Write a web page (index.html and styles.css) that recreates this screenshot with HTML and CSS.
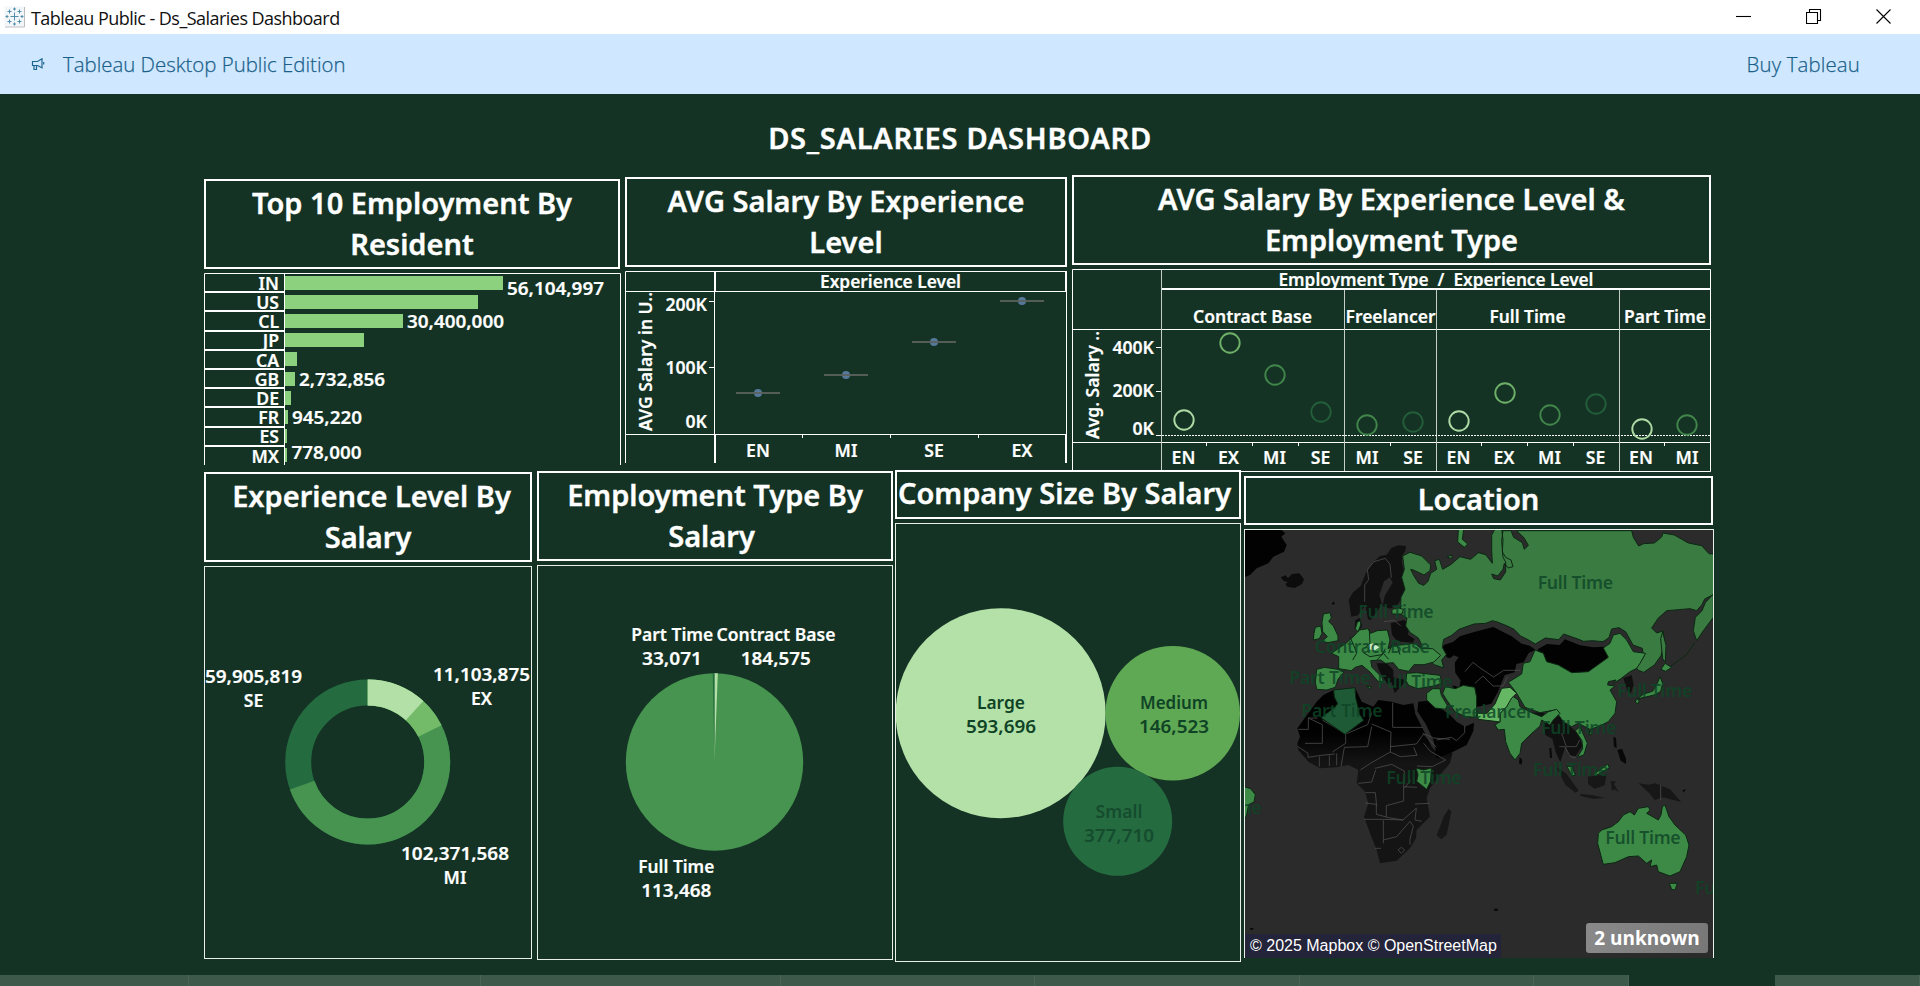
FILE: index.html
```html
<!DOCTYPE html>
<html lang="en">
<head>
<meta charset="utf-8">
<title>Tableau Public - Ds_Salaries Dashboard</title>
<link rel="stylesheet" href="styles.css">
</head>
<body>
<header class="titlebar">
  <svg class="app-icon" viewBox="0 0 22 22"><rect x=".5" y=".5" width="20" height="20" fill="#f3f6f8"/><path d="M20.5 1v20H1" fill="none" stroke="#b9bdc0"/><path d="M10.500 6.500v8M6.500 10.500h8M5.500 3.500v4M3.500 5.500h4M15.500 3.500v4M13.500 5.500h4M5.500 13.500v4M3.500 15.500h4M15.500 13.500v4M13.500 15.500h4M10.500 1.500v3M9 3h3M10.500 16.500v3M9 18h3M3 9v3M1.500 10.500h3M18 9v3M16.500 10.500h3" stroke="#4f8fab" fill="none"/></svg>
  <span class="app-title">Tableau Public - Ds_Salaries Dashboard</span>
  <div class="window-buttons">
    <svg viewBox="0 0 16 16"><path d="M0 7.500h15" /></svg>
    <svg viewBox="0 0 16 16"><path d="M.500 3.500h11v11h-11zM3.500 3.500v-3h11v11h-3"/></svg>
    <svg viewBox="0 0 16 16"><path d="M.500.500l14 14M14.500.500l-14 14"/></svg>
  </div>
</header>
<div class="banner">
  <svg class="megaphone" viewBox="0 0 14 13"><path d="M1.500 3.500h5L11 .800v8.900L6.500 7.500h-5zM3 7.500v4h2.500v-4M12.700 4v2.500" fill="none" stroke="#1d6591" stroke-width="1.200"/></svg>
  <span class="edition">Tableau Desktop Public Edition</span>
  <span class="buy">Buy Tableau</span>
</div>
<main class="dashboard">
  <h1>DS_SALARIES DASHBOARD</h1>
  <div class="row row-top">
    <section class="panel p-resident">
      <h2><span>Top 10 Employment By</span><span>Resident</span></h2>
      <svg class="chart" viewBox="204 273 417 192">
        <path class="rule" d="M204.500 465V273.500H620.500V465M284.500 273v192"/>
        <path class="rule thick" d="M205 292h79M205 311h79M205 331h79M205 350h79M205 369h79M205 388h79M205 407h79M205 427h79M205 446h79"/>
        <g fill="#8cd17d"><rect x="285" y="276" width="218" height="14"/><rect x="285" y="295" width="193" height="14"/><rect x="285" y="314" width="118" height="14"/><rect x="285" y="333" width="79" height="14"/><rect x="285" y="352" width="12" height="14"/><rect x="285" y="372" width="10" height="14"/><rect x="285" y="391" width="6" height="14"/><rect x="285" y="410" width="3" height="14"/><rect x="285" y="429" width="2" height="14"/><rect x="285" y="448" width="2" height="14"/></g>
        <g class="end">
          <text x="279" y="290">IN</text><text x="279" y="309">US</text><text x="279" y="328">CL</text><text x="279" y="347">JP</text><text x="279" y="367">CA</text><text x="279" y="386">GB</text><text x="279" y="405">DE</text><text x="279" y="424">FR</text><text x="279" y="443">ES</text><text x="279" y="463">MX</text>
        </g>
        <text x="507" y="295" textLength="97" lengthAdjust="spacingAndGlyphs">56,104,997</text><text x="407" y="328" textLength="97" lengthAdjust="spacingAndGlyphs">30,400,000</text><text x="299" y="386" textLength="86" lengthAdjust="spacingAndGlyphs">2,732,856</text><text x="292" y="424" textLength="70" lengthAdjust="spacingAndGlyphs">945,220</text><text x="291.500" y="459" textLength="70" lengthAdjust="spacingAndGlyphs">778,000</text>
      </svg>
    </section>
    <section class="panel p-level">
      <h2><span>AVG Salary By Experience</span><span>Level</span></h2>
      <svg class="chart" viewBox="625 271 442 192">
        <path class="rule" d="M625.500 463V271.500H1066.500V463M625 291.500h442M625 434.500h442M714.500 271v192M709 301.500h5M709 367.500h5M802.500 435v3M890.500 435v3M978.500 435v3"/>
        <path class="rule thick" d="M715 271v20M715 435v28M1066 271v20M1066 435v28"/>
        <g class="mid">
          <text x="890.500" y="287.500" textLength="141" lengthAdjust="spacingAndGlyphs">Experience Level</text>
          <text x="758" y="457">EN</text><text x="846" y="457">MI</text><text x="934" y="457">SE</text><text x="1022" y="457">EX</text>
        </g>
        <g class="end"><text x="707" y="311">200K</text><text x="707" y="374">100K</text><text x="707" y="428">0K</text></g>
        <text transform="translate(652 431) rotate(-90)" textLength="139" lengthAdjust="spacingAndGlyphs">AVG Salary in U..</text>
        <g fill="#55799a"><circle cx="758" cy="393" r="4"/><circle cx="846" cy="375" r="4"/><circle cx="934" cy="342" r="4"/><circle cx="1022" cy="301" r="4"/></g>
        <path d="M736 393h44M824 375h44M912 342h44M1000 301h44" stroke="#5b625d" stroke-width="2" opacity=".9"/>
      </svg>
    </section>
    <section class="panel p-type">
      <h2><span>AVG Salary By Experience Level &amp;</span><span>Employment Type</span></h2>
      <svg class="chart" viewBox="1072 269 639 203">
        <path class="rule" d="M1072.500 269.500H1710.500V471.500H1072.500zM1072 329.500h639M1072 442.500h639M1156 347.500h5M1156 391.500h5M1156 435.500h5M1206.500 443v3M1252.500 443v3M1298.500 443v3M1390.500 443v3M1481.500 443v3M1527.500 443v3M1573.500 443v3M1664.500 443v3"/>
        <path class="rule soft" d="M1161.500 270v201M1344.500 290v181M1436.500 290v181M1619.500 290v181"/>
        <path class="rule thick" d="M1162 289h549"/>
        <path class="rule" d="M1162 435.500h549" stroke-dasharray="2 1"/>
        <g class="mid">
          <text x="1436" y="285.500" textLength="315" lengthAdjust="spacingAndGlyphs" xml:space="preserve">Employment Type  /  Experience Level</text>
          <text x="1252.500" y="323" textLength="119" lengthAdjust="spacingAndGlyphs">Contract Base</text><text x="1390.500" y="323" textLength="90" lengthAdjust="spacingAndGlyphs">Freelancer</text><text x="1527.500" y="323" textLength="76" lengthAdjust="spacingAndGlyphs">Full Time</text><text x="1665" y="323" textLength="82" lengthAdjust="spacingAndGlyphs">Part Time</text>
          <text x="1183.500" y="464">EN</text><text x="1228.500" y="464">EX</text><text x="1274.500" y="464">MI</text><text x="1320.500" y="464">SE</text><text x="1367" y="464">MI</text><text x="1413" y="464">SE</text><text x="1458.500" y="464">EN</text><text x="1504" y="464">EX</text><text x="1549.500" y="464">MI</text><text x="1595.500" y="464">SE</text><text x="1641" y="464">EN</text><text x="1687" y="464">MI</text>
        </g>
        <g class="end"><text x="1154" y="354">400K</text><text x="1154" y="397">200K</text><text x="1154" y="435">0K</text></g>
        <text transform="translate(1098.500 439) rotate(-90)" textLength="108" lengthAdjust="spacingAndGlyphs">Avg. Salary ..</text>
        <g fill="none" stroke-width="1.900">
          <g stroke="#aedba5"><circle cx="1184" cy="420" r="9.700"/><circle cx="1459" cy="421" r="9.700"/><circle cx="1642" cy="429" r="9.700"/></g>
          <g stroke="#6fb068"><circle cx="1230" cy="343" r="9.700"/><circle cx="1505" cy="393" r="9.700"/></g>
          <g stroke="#41854b"><circle cx="1275" cy="375" r="9.700"/><circle cx="1367" cy="425" r="9.700"/><circle cx="1550" cy="415" r="9.700"/><circle cx="1687" cy="425" r="9.700"/></g>
          <g stroke="#235d3a"><circle cx="1321" cy="412" r="9.700"/><circle cx="1413" cy="422" r="9.700"/><circle cx="1596" cy="404" r="9.700"/></g>
        </g>
      </svg>
    </section>
  </div>
  <div class="row row-bottom">
    <section class="panel p-donut">
      <h2><span class="indent">Experience Level By</span><span>Salary</span></h2>
      <svg class="chart framed" viewBox="205 567 326 391">
        <g fill="none" stroke-width="26" transform="rotate(-90 367.700 762)">
          <circle cx="367.700" cy="762" r="69.500" pathLength="360" stroke="#256b40"/>
          <circle cx="367.700" cy="762" r="69.500" pathLength="360" stroke="#46944f" stroke-dasharray="250.500 109.500"/>
          <circle cx="367.700" cy="762" r="69.500" pathLength="360" stroke="#73bb68" stroke-dasharray="63.500 296.500"/>
          <circle cx="367.700" cy="762" r="69.500" pathLength="360" stroke="#b3e0a6" stroke-dasharray="42.400 317.600"/>
        </g>
        <g class="mid">
          <text x="253.500" y="683" textLength="97" lengthAdjust="spacingAndGlyphs">59,905,819</text><text x="253.500" y="707">SE</text>
          <text x="481.500" y="681" textLength="97" lengthAdjust="spacingAndGlyphs">11,103,875</text><text x="481.500" y="705">EX</text>
          <text x="455" y="860" textLength="108" lengthAdjust="spacingAndGlyphs">102,371,568</text><text x="455" y="884">MI</text>
        </g>
      </svg>
    </section>
    <section class="panel p-pie">
      <h2><span>Employment Type By</span><span class="outdent">Salary</span></h2>
      <svg class="chart framed" viewBox="538 566 354 393">
        <circle cx="714.500" cy="762" r="88.700" fill="#46944f"/>
        <path d="M714.500 762V673.300h3.300z" fill="#b3e0a6"/>
        <path d="M714.500 762V673.300h-1.800z" fill="#256b40"/>
        <g class="mid">
          <text x="672.300" y="641" textLength="82" lengthAdjust="spacingAndGlyphs">Part Time</text><text x="776" y="641" textLength="119" lengthAdjust="spacingAndGlyphs">Contract Base</text>
          <text x="672" y="665" textLength="60" lengthAdjust="spacingAndGlyphs">33,071</text><text x="775.800" y="665" textLength="70" lengthAdjust="spacingAndGlyphs">184,575</text>
          <text x="676.300" y="873" textLength="76" lengthAdjust="spacingAndGlyphs">Full Time</text><text x="676.300" y="897" textLength="70" lengthAdjust="spacingAndGlyphs">113,468</text>
        </g>
      </svg>
    </section>
    <section class="panel p-size">
      <h2><span class="outdent">Company Size By Salary</span></h2>
      <svg class="chart framed" viewBox="896 524 344 437">
        <circle cx="1000.700" cy="713.300" r="105" fill="#b3e1a8"/><circle cx="1172.700" cy="713.300" r="67.300" fill="#5fa854"/><circle cx="1117.700" cy="821.300" r="54.500" fill="#256b40"/>
        <g class="mid deep">
          <text x="1001" y="709" textLength="48" lengthAdjust="spacingAndGlyphs">Large</text><text x="1001" y="733" textLength="70" lengthAdjust="spacingAndGlyphs">593,696</text>
          <text x="1174" y="709" textLength="68" lengthAdjust="spacingAndGlyphs">Medium</text><text x="1174" y="733" textLength="70" lengthAdjust="spacingAndGlyphs">146,523</text>
          <g class="faint"><text x="1119" y="818" textLength="47" lengthAdjust="spacingAndGlyphs">Small</text><text x="1119" y="842" textLength="70" lengthAdjust="spacingAndGlyphs">377,710</text></g>
        </g>
      </svg>
    </section>
    <section class="panel p-map">
      <h2><span>Location</span></h2>
      <div class="map">
        <svg viewBox="1245 530 468 428">
          <defs>
            <linearGradient id="af" gradientUnits="userSpaceOnUse" x1="0" y1="640" x2="0" y2="730"><stop offset="0" stop-color="#010101"/><stop offset="1" stop-color="#141414"/></linearGradient>
          </defs>
          <g transform="translate(1240 520) scale(.33333)" stroke-linejoin="round">
            <!-- land without data -->
            <g fill="#020202">
              <path d="M12 28H122L136 40 124 50 140 75 132 95 100 110 85 130 50 145 30 165 12 172z"/>
              <path fill="#0c0c0c" d="M122 172l14-6 8 8 12-12 22-2 14 18-6 14-22 12-22-4-6-8 8-6-12-2z"/>
              <path fill="#111" d="M326 240l12-22 24-20 16-40 20-30 22-20 20-4 14-20 20-8 24 2-2 14-10 16 0 22 14 52 6 24-14 18-20 32-22 10-22-8 6-30 24-40-8-16-18 12-14 40 8 28-20 30-14 18-8-2-8-42-22 30-20 4z"/>
              <path fill="#0e0e0e" d="M452 310l40-10 16 14-4 30 20 14-6 10-46-4-16-20zM346 300l14-6 6 24-10 16-12-8zM410 430l30 0 20 20 0 30-16 14-26-40zM450 470l50 10-36 40z"/>
              <path d="M230 545l20-20 30-15 65-7 13 27 7 15 35 15 15-20 40 5 35 10 30-5 5 25 20 35 30 50 7 30 18 15 38-7-8 32-30 35-30 40-10 30 10 55-40 40-2 25-18 30-40 37-50 8-10-40-20-50-18-50 13-40-10-35-25-25 5-40-30-15-35 7-50 3-35-20-30-35-3-20 8-20-8-25 18-25z" fill="url(#af)"/>
              <path d="M535 545l50-5 10 20 35 25 20 20 25 15 27-12-2 25-20 42-50 25-40 15-7-25-23-50-30-45z"/>
              <path d="M612 375l28-10 20-16 45-14 55-14 35 18 20 10 30 22 24 6 17 12-20 10-15 28-22 5-5 25-30 8-20 50-20 36-56 12-40-26-20-40 0-50 10-30-24-4-22-16z"/>
              <path d="M893 388l28-16 38 3 16-17 45 18 40 6 32-2 26 32-36 18-32 28-56 0-50-12-34-18z"/>
              <path fill="#101010" d="M830 560l30 20 50-4 10 14-40 10-40-12zM905 590l50-18 16 20 22 30 24 20 10 36-20 30-20-2-10-30-16 50-14-30-10-40-20-10zM1150 475l25-10 6 30-8 24-10-4z"/>
              <path fill="#171717" d="M950 742l30 20 36 50-10 6-30-24zM1020 822l40 4 34 8-34 2-38-8zM1044 770l56-8-6 34-30 10-20-14zM1112 784l16 0-6 8 14 24-12-8-8 4zM1196 790l30 4 20-4 44 18 34 38-56-14-24 8-16-20zM612 888l14-22 8 8-14 70-16 14-14-12z"/>
              <path fill="#080808" d="M839 710l8 10-2 14-8-4zM1120 650l8 4 2 30-8-4zM1132 690l14-4 12 30 0 16-16-10zM928 684h6l2 30h-6zM30 1224h10v5H30zM762 1166h12v6H762zM274 252l8-8 2 10zM76 480l8 2M1328 810l10-2-8 10z"/>
            </g>
            <!-- inland seas -->
            <g fill="#2b2b2b" stroke="none">
              <path d="M524 578l8-4 24 36 24 50 8 34-12-12-20-40zM488 432l30-16 36 8 12 26-30 10-50 8-10-20zM622 420l20-14 14 6-12 16 2 30 16 24-4 20-22-6-12-44z"/>
            </g>
            <g fill="none" stroke="#4a4a4a" stroke-width="2.500">
              <path d="M374 245l0-50 12-16-4-30 20-24 34-10 14 18 4 40M432 305l30-4 20 16M458 548v74M458 622h90M175 628h30v-34h28M205 594l42 20v56h-52M247 600l70 42 66-28 12-36M317 642v28l-40 26M395 612l58 24-2 60-60 34M451 680l78-8 22-30 38 40M395 620l-12 60-70 2-10 58M451 696l30 14 50-4-10-24M551 670l20 24 46 26-40 20-46-2M391 730l-30 20M405 745l50-12 38 20-2 46 0 44-52 14v34l-30-8v-30l-34-4M376 818h30l4 40M491 800l40 2M439 892l50 8 40-36-4 36 20 4M372 898h58l60 2M430 900v70M430 960l40-10 40-46 10 14-10 40 0 16M405 985h18M474 990l10-8 10 8-10 10zM174 680l30 20 0 12 40-6 40-4M238 710v30M268 706v32M290 700v36M355 790l40-4 12-36M525 852l44-2M512 780l-18 24M548 640l32 14 50 4M590 660l44-8 16 10 24-24v-20M675 455l24-28 20 16 42 28 30-20 50 0M705 490l24-22 30 30 30 0 14-28M1262 795v46M965 640l14 40 30 0 10-20M958 680l16 0 18 30 16 4"/>
            </g>
            <!-- countries with records -->
            <g fill="#3d8a47" stroke="#0b2712" stroke-width="3">
              <path fill="#3a7b42" d="M488 108l22-11 35 11 27 27-2 17-18 13-32-15-8-2 10 20 14 22 16 6 12-12 8-24 18-12-6-26 14-4 10 30 24-14 28-24 32 8 23-20 22 6 20 26-2-40 0-44 10-20 20 0 4 34-2 36 10 16 16 8 6 20-14 4-12-14-4 18-16 20-18-6 6 14 20 4 16-24 0-30-8-14-4-50 4-30h24l8 20 26 16 6 20 12-12-14-24-22-20h346l5 20 16 26 15-7 32-2 22-18 4-12 34 6 42 24 40 8 22 24 23 2v116l-36 18-8 17-16 18-20-6-35 3-35 3-25 22-20 30 15 15 20-6 2 36-9 38-20 28-32 22-16-6-8-10 12-12 12-20-4-24-28-10-22-40-20-12-22 4-8 26-18 12-32-3-26 2-15-6-45-16-15 17-40-5-30 18-20-12-24-12-20-20-20-10-30-12-15-4-20 8-35 2-45 16-22 18-24 12-4 24 12 22-14 16 6 24-28-10-30-24-12-16 4-20-10-20-24-16-14-20 4-24-20-12 2-50 12-24-10-36 8-24z"/>
              <path fill="#3a7b42" d="M1366 292l20-20 10-24 24-26v70l-30 40-20 30-10-30zM1268 336l10 40-2 50-8-10-6-60z"/>
              <path d="M805 487l40-25 5-32 20-5 15-35 25 10 10 25 35 10 40 23 50-3 35-25 25-18-15-28 20-14 10-25 20-5 20 20 20 35 37 5-17 30-10 15-20 10-30 23-20 12 8-10-23 5-2 10 22 3-15 12 20 35-5 35-20 25-30 15-25 8-35-18-20 10-25-15-25-35-45 8-45-16-25-42-15-20z"/>
              <path d="M820 530l15 10 5 20 35 18 30 12 20-15 25-7 10 12-20 20-10 15-25-15-5 18-30 27-25 25-5 30-15 20-15-20-13-35-4-37-18 2-10-15 15-10 0-25 20-20 5-20z"/>
              <path fill="#66b763" d="M785 505l25-3 20 18-15 14-15 26-20 20 0 26-15-2-50-6-4-18 30 0 24-28z"/>
              <path fill="#3b8444" d="M616 500l30 6 24-10 34 6 6 30 0 60-34-2-30-14-26-36-12-20z"/>
              <path d="M560 520l18-14 22 0 4 20 18 30-6 12-30-4-26-24zM500 460l30-2 70 8 6 24-24 8-50 8-26-10-8-14z"/>
              <path d="M230 448l24-6 40 6 18 8-18 22-8 24-26 8-30-2-4-22zM274 400l26-18 20-14 22-20 16-18 26-4 8 14 20-8 30-2 8 30-6 26 20-10 30-2 30-4 20 16 34 0 24 20-20 20-30 8-30 0-16 20-30-6-16-20-24 2-14-10-30 2 4 20 30 30 4 12-16 0-24-28-24-20-20 6-12 10-38-6 0-36z"/>
              <path d="M370 398l20 12 36-6 10-18M388 330l2 40-16 14M330 350l20 48M446 400l12-32M350 400l-12 20M410 420l20-20 16 18M480 404l-10-32" fill="none"/>
              <path d="M250 282l20-4 4 16-8 10 14 14 14 30 0 14-30 6-18-4 16-14-14-16-2-26zM226 322l16-4 4 22-8 16-18 4 2-20zM352 306l10-4 0 14-8 20-8-10zM456 268l20-4 14 4-4 14-30 0zM378 498l16 2-4 6z"/>
              <path fill="#1f5a36" d="M281 510l64-7 2 30 12 50 12 18-56 42-72-50 40-30 10-12-10-20z"/>
              <path fill="#cfeec5" stroke="none" d="M384 376l14-6 20 12-16 10-14-4z"/>
              <path d="M528 744l22 6 24-6-2 40-12 24-30-24 4-20zM12 800l20 6 14 18-4 22-16 8-6 30-8 20z"/>
              <path d="M1075 940l10-10 30-10 20-15 15-20 20-10 13 10 12-20 30-5 5 10-10 10 35 20 8-15 4-25 8-5 12 35 18 25 32 30 10 30-7 35-20 45-30 13-35-13-5-20-20 5 5-20-15 10-25-22-30 2-40 18-35 5-5-18-12-45zM1288 1090h24l-7 20-10-2z"/>
              <path d="M1275 430l20 12-18 12-14-6zM1260 470l8 20-6 24-16 10-32 8-20 4 16-14 28-8 14-24zM1190 536l8 6-4 10-8-6zM980 738l16 2 10 26-10 2zM1060 762l20-12 24-18 4 12-26 14-16 10zM1020 620l22 50-10 34-20 8 16-26-2-24-20-30zM1048 632l8 8-6 6zM620 110l16-4 0 10zM655 28l16 0-4 30 16 14-10 10-20-16z"/>
              <path fill="none" d="M1290 440l50-36 24-36"/>
            </g>
            <g class="map-label">
              <text x="468" y="294" textLength="226">Full Time</text><text x="397" y="400" textLength="345">Contract Base</text><text x="270" y="492" textLength="244">Part Time</text><text x="525" y="503" textLength="226">Full Time</text><text x="306" y="591" textLength="244">Part Time</text><text x="748" y="595" textLength="266">Freelancer</text><text x="552" y="791" textLength="226">Full Time</text><text x="1006" y="206" textLength="226">Full Time</text><text x="1244" y="530" textLength="226">Full Time</text><text x="1016" y="643" textLength="226">Full Time</text><text x="992" y="768" textLength="226">Full Time</text><text x="1209" y="971" textLength="226">Full Time</text><text x="1478" y="1122" textLength="226">Full Time</text><text x="-48" y="882" textLength="226">Full Time</text>
            </g>
          </g>
        </svg>
        <div class="map-footer"><span class="credit">© 2025 Mapbox © OpenStreetMap</span><span class="unknown">2 unknown</span></div>
      </div>
    </section>
  </div>
</main>
<footer class="sheet-tabs"><i class="t1"></i><i class="t2"></i><i class="t3"></i><i class="t4"></i><i class="t5"></i><i class="t6"></i><i class="t7"></i><i class="active"></i><i class="rest"></i></footer>
</body>
</html>
```
FILE: styles.css
```css
* { box-sizing: border-box; }
body { margin: 0; width: 1920px; height: 986px; overflow: hidden; background: #143324; color: #fff; font-family: "Noto Sans", "Open Sans", sans-serif; display: flex; flex-direction: column; }
svg { display: block; }

.titlebar { height: 34px; flex: none; background: #fff; color: #111; display: flex; align-items: center; padding: 0 28px 0 4px; }
.app-icon { width: 22px; height: 22px; margin-right: 5px; }
.app-title { font: 400 18px/34px "Open Sans", sans-serif; letter-spacing: -.54px; padding-top: 1px; }
.window-buttons { margin-left: auto; display: flex; gap: 54px; }
.window-buttons svg { width: 16px; height: 16px; fill: none; stroke: #000; stroke-width: 1.1; }

.banner { height: 60px; flex: none; background: #cfe8ff; color: #1a5f8a; display: flex; align-items: center; padding: 0 60px 0 31px; font: 300 20.4px/60px "Open Sans", sans-serif; -webkit-text-stroke: .25px #1a5f8a; }
.megaphone { width: 14px; height: 13px; margin-right: 18px; }
.buy { margin-left: auto; letter-spacing: .15px; }

.dashboard { height: 881px; flex: none; }
h1 { margin: 0; height: 81px; padding-top: 24px; font-size: 29px; letter-spacing: .75px; line-height: 40px; font-weight: 600; text-align: center; -webkit-text-stroke: .4px #fff; }
.row { display: flex; align-items: flex-start; padding-left: 204px; }
.row-top { height: 295px; }
.panel { flex: none; display: flex; flex-direction: column; gap: 4px; }
.panel h2 { margin: 0; height: 90px; border: 2px solid #fff; font-size: 29px; line-height: 41px; font-weight: 600; text-align: center; padding-top: 1px; white-space: nowrap; -webkit-text-stroke: .4px #fff; }
.panel h2 span { display: block; }
.panel h2 .indent { padding-left: 7px; }
.panel h2 .outdent { padding-right: 7px; }
.chart { width: 100%; overflow: hidden; }
.framed { border: 1px solid #e8eee9; }

.p-resident { width: 417px; margin-top: 4px; }
.p-resident h2 { width: 416px; }
.p-resident .chart { height: 192px; }
.p-level { width: 442px; margin: 2px 0 0 4px; }
.p-level .chart { height: 192px; }
.p-type { width: 639px; margin-left: 5px; }
.p-type .chart { height: 203px; }
.p-donut { width: 328px; margin-top: 2px; }
.p-donut .chart { height: 393px; }
.p-pie { width: 356px; margin: 1px 0 0 5px; }
.p-pie .chart { height: 395px; }
.p-size { width: 346px; margin-left: 2px; }
.panel.p-size h2, .panel.p-map h2 { height: 49px; padding-top: 0; }
.p-size .chart { height: 439px; }
.p-map { width: 470px; margin: 6px 0 0 3px; }
.p-map h2 { width: 469px; }

text { font: 600 17.6px "Noto Sans", "Open Sans", sans-serif; fill: #fff; stroke: #fff; stroke-width: .2px; }
.mid text { text-anchor: middle; }
.end text { text-anchor: end; }
.deep text { fill: #0f4325; stroke: none; }
.deep .faint text { fill: #154c2e; }
.rule { fill: none; stroke: #fff; stroke-width: 1; }
.rule.thick { stroke-width: 2; }
.rule.soft { stroke: #c5cfc8; }

.map { position: relative; height: 429px; border: 1px solid #e8eee9; border-bottom: 0; background: #2b2b2b; }
.map svg { width: 468px; height: 428px; }
.map-label text { font-size: 53px; text-anchor: middle; fill: #0d4526; fill-opacity: .82; stroke: none; }
.map-footer { position: absolute; left: 0; right: 5px; bottom: 0; display: flex; justify-content: space-between; align-items: flex-end; }
.credit { font: 16px/23px "Liberation Sans", Arial, sans-serif; background: #23233a; padding: 0 4px 1px 5px; }
.unknown { font: 700 19px/30px "Open Sans", sans-serif; width: 122px; height: 30px; margin-bottom: 5px; text-align: center; border-radius: 3px; background: linear-gradient(110deg, #8a8a8a, #777); }

.sheet-tabs { height: 11px; flex: none; display: flex; }
.sheet-tabs i { background: #3d5949; border-right: 1px solid #4b6456; }
.t1 { width: 189px; } .t2 { width: 292px; } .t3 { width: 300px; } .t4 { width: 254px; } .t5 { width: 265px; } .t6 { width: 234px; } .t7 { width: 95px; }
.sheet-tabs .active { width: 146px; background: none; border: 0; }
.rest { flex: 1; }
```
